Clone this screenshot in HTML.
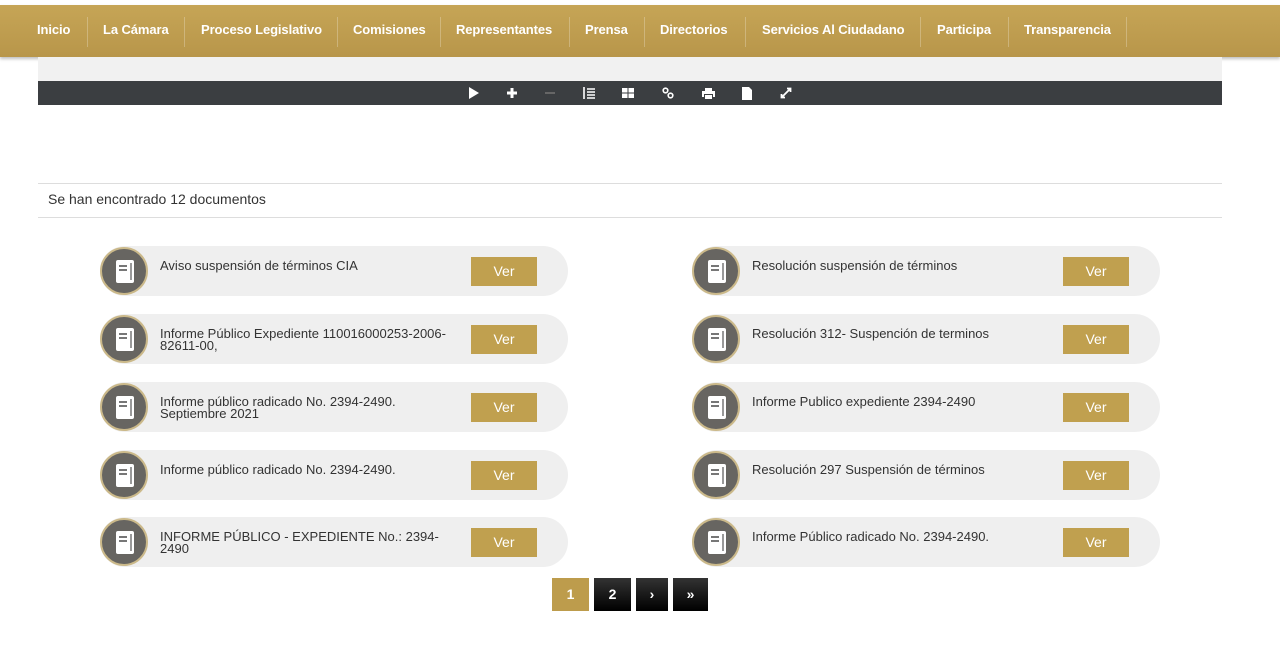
<!DOCTYPE html>
<html><head><meta charset="utf-8"><style>
*{margin:0;padding:0;box-sizing:border-box}
body{width:1280px;height:648px;background:#fff;font-family:"Liberation Sans",sans-serif;position:relative;overflow:hidden}
.nav{position:absolute;left:0;top:5px;width:1280px;height:52px;background:linear-gradient(#c6a556,#b8964a);box-shadow:0 2px 3px rgba(0,0,0,.25)}
.nav span{position:absolute;top:0;height:52px;line-height:50px;color:#fff;font-size:13px;font-weight:bold;letter-spacing:-0.1px}
.sep{position:absolute;top:12px;width:1px;height:30px;background:rgba(255,255,255,.25)}
.gray{position:absolute;left:38px;top:57px;width:1184px;height:24px;background:#f1f1f1}
.tool{position:absolute;left:38px;top:81px;width:1184px;height:24px;background:#3b3e41}
.tool svg{position:absolute;top:6px}
.hr{position:absolute;left:38px;width:1184px;height:1px;background:#ddd}
.count{position:absolute;left:48px;top:191px;font-size:14px;color:#333}
.card{position:absolute;width:468px;height:50px;border-radius:25px;background:#efefef}
.ic{position:absolute;left:0;top:1px;width:48px;height:48px;border-radius:50%;background:#676561;border:2px solid #cbb98a}
.ic div{position:absolute;left:14px;top:11px;width:18px;height:23px;background:#fff;border-radius:2px}
.ic div:before{content:"";position:absolute;left:3px;top:5px;width:8px;height:2px;background:#777;box-shadow:0 4px 0 #777}
.ic div:after{content:"";position:absolute;right:2px;top:3px;width:2px;height:17px;background:#999}
.t{position:absolute;left:60px;top:14px;width:292px;font-size:13px;line-height:12px;color:#333}
.b{position:absolute;left:371px;top:11px;width:66px;height:29px;background:#c0a04f;color:#fff;font-size:14px;text-align:center;line-height:29px}
.pg{position:absolute;top:578px;height:33px;color:#fff;font-weight:bold;font-size:14px;text-align:center;line-height:33px;background:linear-gradient(#333,#000)}
</style></head><body>
<div class="nav">
<span style="left:37px">Inicio</span><div class="sep" style="left:87px"></div>
<span style="left:103px">La Cámara</span><div class="sep" style="left:184px"></div>
<span style="left:201px">Proceso Legislativo</span><div class="sep" style="left:337px"></div>
<span style="left:353px">Comisiones</span><div class="sep" style="left:440px"></div>
<span style="left:456px">Representantes</span><div class="sep" style="left:569px"></div>
<span style="left:585px">Prensa</span><div class="sep" style="left:644px"></div>
<span style="left:660px">Directorios</span><div class="sep" style="left:745px"></div>
<span style="left:762px">Servicios Al Ciudadano</span><div class="sep" style="left:920px"></div>
<span style="left:937px">Participa</span><div class="sep" style="left:1008px"></div>
<span style="left:1024px">Transparencia</span><div class="sep" style="left:1126px"></div>
</div>
<div class="gray"></div>
<div class="tool">
<svg style="left:430px" width="12" height="12"><path d="M1 0L11 6L1 12Z" fill="#fff"/></svg>
<svg style="left:468px" width="12" height="12"><path d="M4.5 1h3v3.5h3.5v3h-3.5v3.5h-3v-3.5h-3.5v-3h3.5z" fill="#fff"/></svg>
<svg style="left:506px" width="12" height="12"><rect x="1" y="5" width="10" height="2" fill="#666"/></svg>
<svg style="left:545px" width="12" height="12"><path d="M1 0v12M4 2h8M4 5h8M4 8h8M4 11h8" stroke="#fff" stroke-width="1.6"/></svg>
<svg style="left:584px" width="12" height="12"><path d="M0 1h5.5v4.5h-5.5zM6.5 1h5.5v4.5h-5.5zM0 6.5h5.5v4.5h-5.5zM6.5 6.5h5.5v4.5h-5.5z" fill="#fff"/></svg>
<svg style="left:624px" width="12" height="12"><circle cx="3.5" cy="3.5" r="2.3" stroke="#fff" stroke-width="1.6" fill="none"/><circle cx="8.5" cy="8.5" r="2.3" stroke="#fff" stroke-width="1.6" fill="none"/></svg>
<svg style="left:664px" width="13" height="12"><path d="M3 1h7v3h-7z M0 4h13v6h-2v-3h-9v3h-2z M3 8h7v4h-7z" fill="#fff"/></svg>
<svg style="left:703px" width="12" height="13"><path d="M1 0h7l3 3v10h-10z" fill="#fff"/></svg>
<svg style="left:742px" width="12" height="12"><path d="M2 10L10 2M7 1.5h3.5v3.5M1.5 7v3.5h3.5" stroke="#fff" stroke-width="1.8" fill="none"/></svg>
</div>
<div class="hr" style="top:183px"></div>
<div class="count">Se han encontrado 12 documentos</div>
<div class="hr" style="top:217px"></div>

<div class="card" style="left:100px;top:246px"><div class="ic"><div></div></div><div class="t">Aviso suspensión de términos CIA</div><div class="b">Ver</div></div>
<div class="card" style="left:692px;top:246px"><div class="ic"><div></div></div><div class="t">Resolución suspensión de términos</div><div class="b">Ver</div></div>
<div class="card" style="left:100px;top:314px"><div class="ic"><div></div></div><div class="t">Informe Público Expediente 110016000253-2006-<br>82611-00,</div><div class="b">Ver</div></div>
<div class="card" style="left:692px;top:314px"><div class="ic"><div></div></div><div class="t">Resolución 312- Suspención de terminos</div><div class="b">Ver</div></div>
<div class="card" style="left:100px;top:382px"><div class="ic"><div></div></div><div class="t">Informe público radicado No. 2394-2490.<br>Septiembre 2021</div><div class="b">Ver</div></div>
<div class="card" style="left:692px;top:382px"><div class="ic"><div></div></div><div class="t">Informe Publico expediente 2394-2490</div><div class="b">Ver</div></div>
<div class="card" style="left:100px;top:450px"><div class="ic"><div></div></div><div class="t">Informe público radicado No. 2394-2490.</div><div class="b">Ver</div></div>
<div class="card" style="left:692px;top:450px"><div class="ic"><div></div></div><div class="t">Resolución 297 Suspensión de términos</div><div class="b">Ver</div></div>
<div class="card" style="left:100px;top:517px"><div class="ic"><div></div></div><div class="t">INFORME PÚBLICO - EXPEDIENTE No.: 2394-<br>2490</div><div class="b">Ver</div></div>
<div class="card" style="left:692px;top:517px"><div class="ic"><div></div></div><div class="t">Informe Público radicado No. 2394-2490.</div><div class="b">Ver</div></div>

<div class="pg" style="left:552px;width:37px;background:#bd9c4c">1</div>
<div class="pg" style="left:594px;width:37px">2</div>
<div class="pg" style="left:636px;width:32px">›</div>
<div class="pg" style="left:673px;width:35px">»</div>
</body></html>
